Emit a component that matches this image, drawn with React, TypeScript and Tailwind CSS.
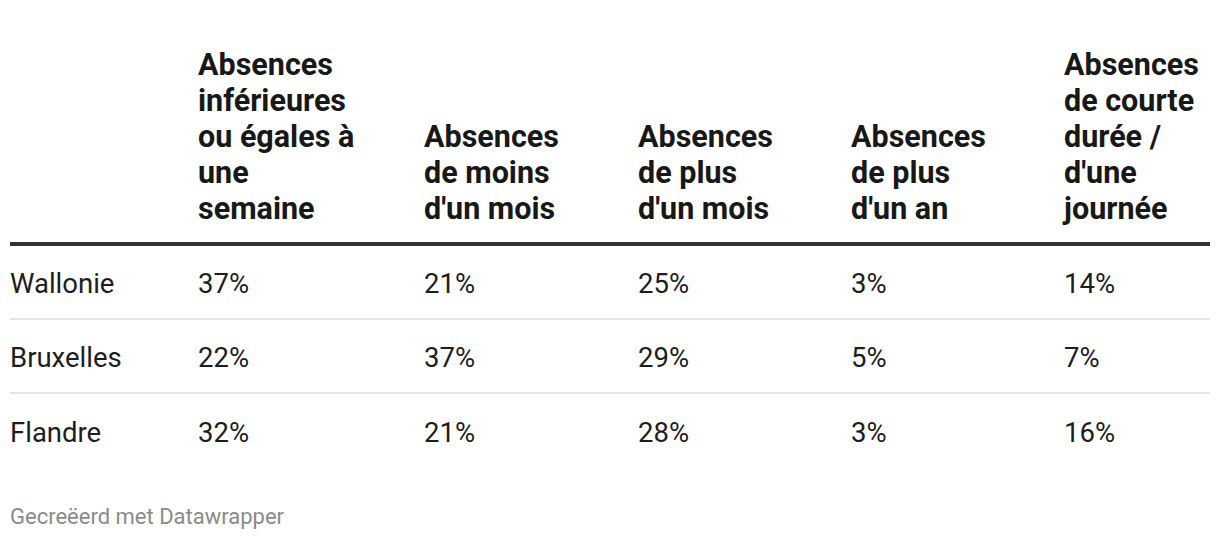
import React from "react";

const headers: string[][] = [
  [],
  ["Absences", "inférieures", "ou égales à", "une", "semaine"],
  ["Absences", "de moins", "d'un mois"],
  ["Absences", "de plus", "d'un mois"],
  ["Absences", "de plus", "d'un an"],
  ["Absences", "de courte", "durée /", "d'une", "journée"],
];

const rows: string[][] = [
  ["Wallonie", "37%", "21%", "25%", "3%", "14%"],
  ["Bruxelles", "22%", "37%", "29%", "5%", "7%"],
  ["Flandre", "32%", "21%", "28%", "3%", "16%"],
];

const grid = "grid grid-cols-[188px_226px_214px_213px_213px_146px]";

export default function App() {
  return (
    <div
      className="w-[1220px] h-[542px] bg-white px-[10px] pt-[47px] text-[#1d1d1d]"
      style={{ fontFamily: "Roboto, 'Noto Sans', sans-serif" }}
    >
      <div className={`${grid} items-end border-b-4 border-[#333333] pb-[15px]`}>
        {headers.map((lines, i) => (
          <div key={i} className="text-[30.5px] leading-[36px] font-bold whitespace-nowrap text-[#181818]">
            {lines.map((l, j) => (
              <div key={j}>{l}</div>
            ))}
          </div>
        ))}
      </div>
      {rows.map((r, i) => (
        <div
          key={i}
          className={`${grid} items-center h-[74px] pt-[3px] text-[27.5px] leading-[32px] ${
            i < rows.length - 1 ? "border-b-2 border-[#e6e6e6]" : ""
          }`}
        >
          {r.map((c, j) => (
            <div key={j} className="whitespace-nowrap">
              {c}
            </div>
          ))}
        </div>
      ))}
      <div className="mt-[36px] text-[22px] leading-[26px] text-[#8a8a8a]">Gecreëerd met Datawrapper</div>
    </div>
  );
}
